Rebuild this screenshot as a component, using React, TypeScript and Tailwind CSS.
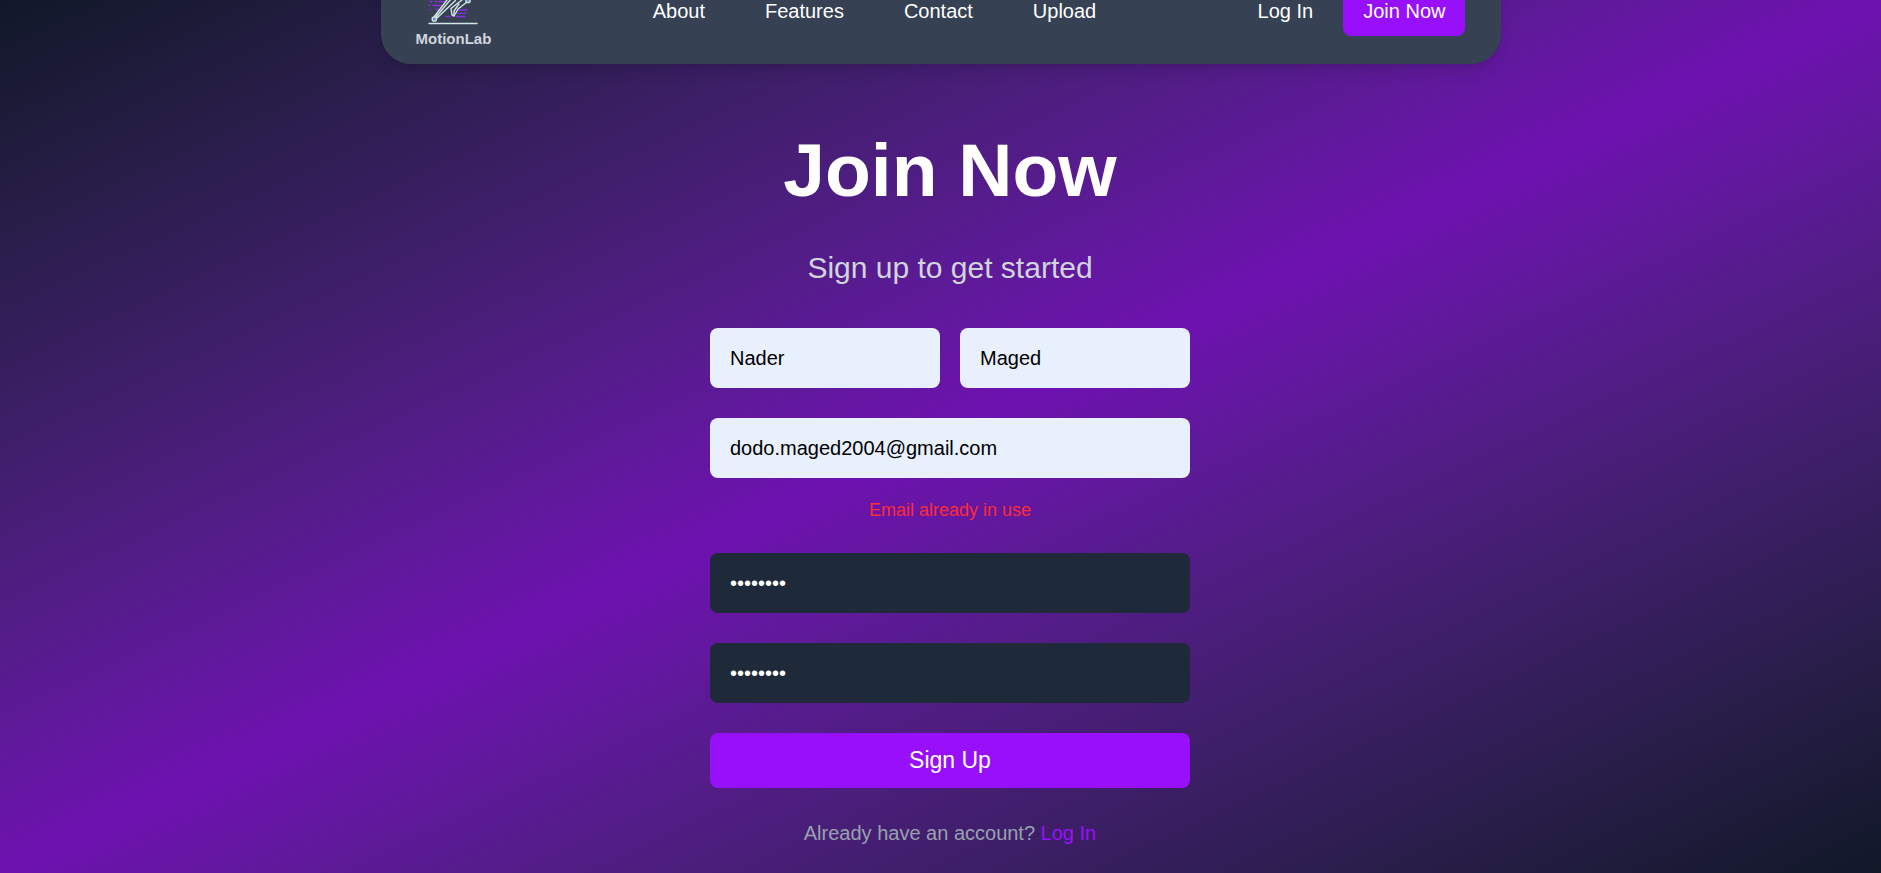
const inputBase =
  "h-[60px] w-full min-w-0 rounded-lg px-5 text-[20px] leading-[30px] outline-none";

function Logo() {
  return (
    <svg viewBox="0 5 52 56" className="h-14 w-[52px]" fill="none" strokeLinecap="round" aria-hidden="true">
      <g stroke="#8b2fe0" strokeWidth="1.3">
        <path d="M1 25h8M12 25h4M2 29h8M3 33.500h2M8 33.500h2M12 33.500h6M2 37.500h1M6 37.500h8M3 41.500h.5M9 41.500h3" />
        <path d="M31 42h9M29 45.300h10M19 48.500h4M29 48.500h9" />
      </g>
      <g stroke="#d5e6e6" strokeWidth="1.4" strokeLinejoin="round">
        <path d="M7 49L20 32L26 24M10 50L28 33L34 22M9 49L24 31" />
        <path d="M40 34L31 41L27 48L25 47L24 40.500L35 32L39 24" />
        <path d="M27 47.500V43L32 36" />
        <path d="M2 55.500h48" />
      </g>
      <circle cx="7.300" cy="51" r="2.200" fill="#6c8fce" stroke="#d5e6e6" strokeWidth="1.300" />
      <circle cx="41" cy="32.500" r="2.200" fill="#6c8fce" stroke="#d5e6e6" strokeWidth="1.300" />
    </svg>
  );
}

function NavBar() {
  return (
    <header className="mx-auto -mt-[42px] flex h-[106px] w-[1120px] max-w-full shrink-0 items-center justify-between rounded-b-[30px] bg-[#364153] px-[35px] text-[20px] leading-[30px] text-white shadow-lg">
      <a href="#home" className="flex flex-col items-center text-[15px] leading-5 font-bold text-gray-300">
        <Logo />
        MotionLab
      </a>
      <nav className="flex gap-[60px]">
        <a href="#about">About</a>
        <a href="#features">Features</a>
        <a href="#contact">Contact</a>
        <a href="#upload">Upload</a>
      </nav>
      <div className="flex items-center gap-[30px]">
        <a href="#login">Log In</a>
        <a href="#join" className="rounded-lg bg-[#9810fa] px-5 py-[10px]">Join Now</a>
      </div>
    </header>
  );
}

export default function App() {
  return (
    <div className="flex min-h-screen flex-col overflow-x-hidden bg-linear-to-br from-gray-900 via-purple-800 to-gray-900 font-['Liberation_Sans',Arial,sans-serif]">
      <NavBar />
      <main className="flex flex-col items-center pt-[60px] pl-[19px]">
        <h1 className="text-[75px] leading-[92px] font-bold text-white">Join Now</h1>
        <p className="mt-8 text-[30px] leading-10 text-gray-300">Sign up to get started</p>
        <form className="mt-10 flex w-[480px] max-w-full flex-col text-center" onSubmit={(e) => e.preventDefault()}>
          <div className="grid grid-cols-2 gap-5">
            <input aria-label="First name" className={`${inputBase} bg-[#e8f0fe] text-black`} defaultValue="Nader" />
            <input aria-label="Last name" className={`${inputBase} bg-[#e8f0fe] text-black`} defaultValue="Maged" />
          </div>
          <input aria-label="Email" type="email" className={`${inputBase} mt-[30px] bg-[#e8f0fe] text-black`} defaultValue="dodo.maged2004@gmail.com" />
          <p className="mt-5 text-[18px] leading-[25px] text-[#fb2c36]" role="alert">Email already in use</p>
          <input aria-label="Password" type="password" className={`${inputBase} mt-[30px] bg-[#1e2939] text-white`} defaultValue="password" />
          <input aria-label="Confirm password" type="password" className={`${inputBase} mt-[30px] bg-[#1e2939] text-white`} defaultValue="password" />
          <button type="submit" className="mt-[30px] h-[55px] rounded-lg bg-[#9810fa] text-[23px] leading-[35px] text-white">Sign Up</button>
        </form>
        <p className="mt-[30px] text-[20px] leading-[30px] text-[#99a1af]">
          Already have an account? <a href="#login" className="text-[#9810fa]">Log In</a>
        </p>
      </main>
    </div>
  );
}
